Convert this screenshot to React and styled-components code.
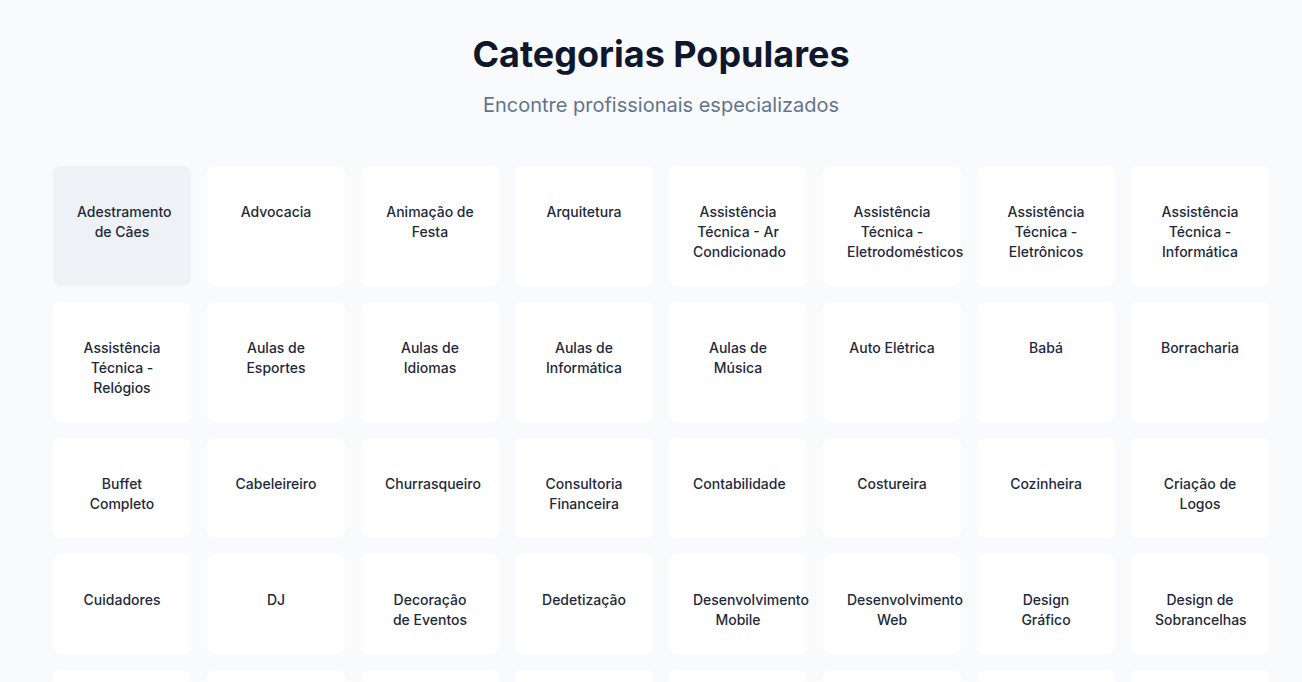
import React from "react";
import styled, { createGlobalStyle } from "styled-components";

const GlobalStyle = createGlobalStyle`
  * {
    box-sizing: border-box;
  }
  body {
    margin: 0;
    background: #f8fafc;
    font-family: Inter, "Noto Sans", sans-serif;
  }
`;

const Section = styled.section`
  padding: 32px 33px 48px 53px;
`;

const Header = styled.div`
  text-align: center;
  margin-bottom: 47px;
`;

const Title = styled.h2`
  margin: 0 0 15px;
  font-size: 36px;
  line-height: 44px;
  font-weight: 700;
  color: #0f172a;
`;

const SubTitle = styled.p`
  margin: 0;
  font-size: 20px;
  line-height: 28px;
  color: #64748b;
`;

const Grid = styled.div`
  display: grid;
  grid-template-columns: repeat(8, 138px);
  gap: 16px;
  justify-content: center;
`;

const Card = styled.div`
  display: flex;
  flex-direction: column;
  align-items: center;
  min-height: 100px;
  padding: 36px 24px 24px;
  border-radius: 8px;
  background: ${(p) => (p.active ? "#eef2f6" : "#ffffff")};
  cursor: pointer;
`;

const Name = styled.span`
  width: 100%;
  font-size: 14px;
  line-height: 20px;
  font-weight: 500;
  color: #1e293b;
  text-align: center;
`;

const categories = [
  "Adestramento de Cães",
  "Advocacia",
  "Animação de Festa",
  "Arquitetura",
  "Assistência Técnica - Ar Condicionado",
  "Assistência Técnica - Eletrodomésticos",
  "Assistência Técnica - Eletrônicos",
  "Assistência Técnica - Informática",
  "Assistência Técnica - Relógios",
  "Aulas de Esportes",
  "Aulas de Idiomas",
  "Aulas de Informática",
  "Aulas de Música",
  "Auto Elétrica",
  "Babá",
  "Borracharia",
  "Buffet Completo",
  "Cabeleireiro",
  "Churrasqueiro",
  "Consultoria Financeira",
  "Contabilidade",
  "Costureira",
  "Cozinheira",
  "Criação de Logos",
  "Cuidadores",
  "DJ",
  "Decoração de Eventos",
  "Dedetização",
  "Desenvolvimento Mobile",
  "Desenvolvimento Web",
  "Design Gráfico",
  "Design de Sobrancelhas",
  "Diarista",
  "Eletricista",
  "Encanador",
  "Fotógrafo",
  "Garçom",
  "Jardineiro",
  "Manicure",
  "Marceneiro",
];

export default function App() {
  return (
    <>
      <GlobalStyle />
      <Section>
        <Header>
          <Title>Categorias Populares</Title>
          <SubTitle>Encontre profissionais especializados</SubTitle>
        </Header>
        <Grid>
          {categories.map((name, index) => (
            <Card key={name} active={index === 0}>
              <Name>{name}</Name>
            </Card>
          ))}
        </Grid>
      </Section>
    </>
  );
}
